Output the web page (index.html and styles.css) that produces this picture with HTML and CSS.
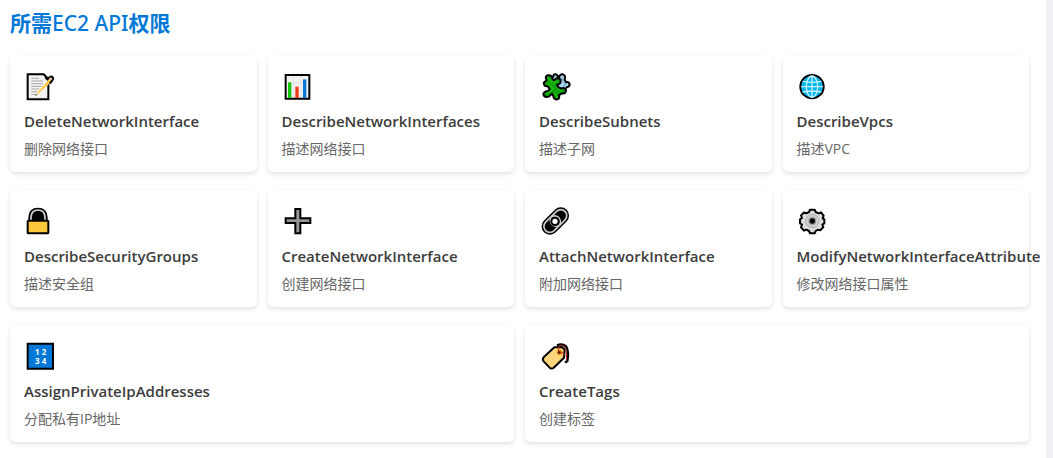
FILE: index.html
```html
<!DOCTYPE html>
<html lang="zh-CN">
<head>
<meta charset="utf-8">
<meta name="viewport" content="width=device-width, initial-scale=1">
<title>所需EC2 API权限</title>
<link rel="stylesheet" href="styles.css">
</head>
<body>
<main class="panel">
<h2 class="title">所需<span class="latin">EC2 API</span>权限</h2>
<ul class="grid">
<li class="card">
<svg class="icon" viewBox="12 9 96 96" aria-hidden="true"><path d="M23 19H71L85 33V94H23Z" fill="#f2f2f2" stroke="#000" stroke-width="6"/><path d="M34 31H57M34 39H69M34 47H69M34 55H66M34 63H58M34 71H52M34 79H48" stroke="#aaa" stroke-width="3"/><path d="M48 83L53 72L90 31L97 38L57 76Z" fill="#ffc83d" stroke="#fff" stroke-width="1"/><path d="M76 28L81 33L90 27Q96 24 99 29Q101 34 96 39L89 47" fill="none" stroke="#000" stroke-width="6"/><path d="M89 35L94 30" stroke="#efaeb0" stroke-width="7"/><path d="M45 84L50 78L52 81Z" fill="#333"/></svg>
<h3 class="name">DeleteNetworkInterface</h3>
<p class="desc">删除网络接口</p>
</li>
<li class="card">
<svg class="icon" viewBox="12 9 96 96" aria-hidden="true"><path d="M23 21H94V92H23Z" fill="#f2f2f2" stroke="#000" stroke-width="6"/><path d="M26 44H91M26 67H91M46 24V89M69 24V89" stroke="#ddd" stroke-width="2"/><path d="M35 43V90" stroke="#16c60c" stroke-width="10"/><path d="M57 56V90" stroke="#f03a17" stroke-width="10"/><path d="M80 34V90" stroke="#0078d7" stroke-width="10"/></svg>
<h3 class="name">DescribeNetworkInterfaces</h3>
<p class="desc">描述网络接口</p>
</li>
<li class="card">
<svg class="icon" viewBox="9 9 96 96" aria-hidden="true"><path d="M45 34L52 25Q52 18 60 19Q67 22 66 30L69 31Q70 18 81 19Q90 22 86 34L90 43Q99 40 101 49Q101 57 92 58L80 72L48 52Z" fill="#a9d3ec" stroke="#000" stroke-width="6" stroke-linejoin="round"/><path d="M74 30L80 36L88 48L78 62" fill="none" stroke="#79a9c4" stroke-width="4"/><path d="M23 44L32 37Q25 24 36 22Q47 20 49 32L54 37L62 31Q75 30 74 42Q71 50 63 50L67 57L75 62Q87 57 90 67Q90 78 78 76L68 82Q73 91 64 94Q53 96 52 84L48 77L38 86Q26 90 22 80Q22 71 36 69L41 64L35 54Q24 57 23 44Z" fill="#13a10e" stroke="#000" stroke-width="6" stroke-linejoin="round"/><path d="M38 28L48 46L64 38M34 46L51 62L33 78M65 63L80 69M56 75L63 88" fill="none" stroke="#16c60c" stroke-width="4"/></svg>
<h3 class="name">DescribeSubnets</h3>
<p class="desc">描述子网</p>
</li>
<li class="card">
<svg class="icon" viewBox="15 9 96 96" aria-hidden="true"><circle cx="60" cy="56" r="35" fill="#00b7f0" stroke="#000" stroke-width="6"/><path d="M60 23V89M27 56H93M32 40Q60 46 88 40M32 72Q60 66 88 72" fill="none" stroke="#c9f0fb" stroke-width="4"/><ellipse cx="60" cy="56" rx="17" ry="32" fill="none" stroke="#c9f0fb" stroke-width="4"/></svg>
<h3 class="name">DescribeVpcs</h3>
<p class="desc">描述VPC</p>
</li>
<li class="card">
<svg class="icon" viewBox="12 9 96 96" aria-hidden="true"><path d="M28 55V43Q29 17 54 17Q79 17 80 43V55Z" fill="#000" stroke="#000" stroke-width="6"/><path d="M33 54V43Q34 21 54 21Q74 21 75 43V54" fill="none" stroke="#d3d3d3" stroke-width="5"/><rect x="23" y="53" width="62" height="38" rx="2" fill="#ffc83d" stroke="#000" stroke-width="6"/></svg>
<h3 class="name">DescribeSecurityGroups</h3>
<p class="desc">描述安全组</p>
</li>
<li class="card">
<svg class="icon" viewBox="12 9 96 96" aria-hidden="true"><path d="M52 18H67V46H97V60H67V91H52V60H23V46H52Z" fill="#969696" stroke="#000" stroke-width="6"/></svg>
<h3 class="name">CreateNetworkInterface</h3>
<p class="desc">创建网络接口</p>
</li>
<li class="card">
<svg class="icon" viewBox="9 9 96 96" aria-hidden="true"><g transform="rotate(-45 58 54)"><rect x="10" y="29" width="96" height="50" rx="25"/><g fill="none" stroke="#ccc" stroke-width="5"><rect x="17" y="36" width="55" height="36" rx="18"/><rect x="44" y="36" width="55" height="36" rx="18"/></g></g><circle cx="57" cy="55" r="11" fill="#fff" stroke="#000" stroke-width="6"/></svg>
<h3 class="name">AttachNetworkInterface</h3>
<p class="desc">附加网络接口</p>
</li>
<li class="card">
<svg class="icon" viewBox="15 9 96 96" aria-hidden="true"><path d="M54 20H68L71 27L80 31L87 28L95 38L92 46L97 49V61L91 65L94 72L85 82L78 80L71 84L68 91H54L51 84L43 80L36 83L27 73L30 65L24 61V49L30 45L27 37L36 28L43 31L51 27Z" fill="#dcdcdc" stroke="#000" stroke-width="6" stroke-linejoin="round"/><circle cx="61" cy="54" r="20" fill="#d0d0d0" stroke="#999" stroke-width="2"/><circle cx="61" cy="54" r="12" fill="#999"/><circle cx="61" cy="54" r="8"/></svg>
<h3 class="name">ModifyNetworkInterfaceAttribute</h3>
<p class="desc">修改网络接口属性</p>
</li>
<li class="card wide">
<svg class="icon" viewBox="12 9 96 96" aria-hidden="true"><path d="M23 17H99V92H23Z" fill="#0078d7" stroke="#000" stroke-width="6"/><g class="digits"><text x="52" y="50">1</text><text x="72" y="50">2</text><text x="52" y="77">3</text><text x="72" y="77">4</text></g></svg>
<h3 class="name">AssignPrivateIpAddresses</h3>
<p class="desc">分配私有IP地址</p>
</li>
<li class="card wide">
<svg class="icon" viewBox="9 9 96 96" aria-hidden="true"><path d="M63 22Q81 15 92 28Q99 45 94 69L87 74" fill="none" stroke="#000" stroke-width="7"/><path d="M23 58L55 28L78 27L86 35L84 59L53 89Q47 94 41 89L23 70Q18 64 23 58Z" fill="#ffd67b" stroke="#000" stroke-width="6" stroke-linejoin="round"/><circle cx="71" cy="43" r="9" fill="#f7a51c"/><circle cx="70" cy="43" r="5" fill="#4a1708"/><path d="M70 43Q63 27 72 23Q84 20 89 33Q94 48 91 67M71 43Q83 43 88 53" fill="none" stroke="#b92c18" stroke-width="3"/></svg>
<h3 class="name">CreateTags</h3>
<p class="desc">创建标签</p>
</li>
</ul>
</main>
</body>
</html>
```
FILE: styles.css
```css
* {
  box-sizing: border-box;
}

body {
  margin: 0;
  background: #eef0f4;
  font-family: "Open Sans", "Noto Sans CJK SC", sans-serif;
}

.panel {
  min-height: 100vh;
  margin-right: 7px;
  padding: 8px 17px 16px 10px;
  overflow: hidden;
  background: #fff;
}

.title {
  margin: 0 0 17px;
  color: #0078d7;
  font-family: "Noto Sans", "Noto Sans CJK SC", sans-serif;
  font-size: 21px;
  line-height: 30px;
  font-weight: 700;
}

.latin {
  font-weight: 500;
}

.grid {
  display: grid;
  grid-template-columns: repeat(4, minmax(0, 1fr));
  gap: 18px 11px;
  margin: 0;
  padding: 0;
  list-style: none;
}

.card {
  padding: 16px 14px 13px;
  border-radius: 6px;
  background: #fff;
  box-shadow: 0 2px 5px rgba(0, 0, 0, 0.12);
}

.wide {
  grid-column: span 2;
}

.icon {
  display: block;
  width: 32px;
  height: 32px;
}

.digits {
  fill: #fff;
  font-size: 24px;
  font-weight: 700;
  text-anchor: middle;
}

.name {
  margin: 7px 0 6px;
  color: #3c3c3c;
  font-size: 15px;
  line-height: 22px;
  font-weight: 600;
  white-space: nowrap;
}

.desc {
  margin: 0;
  color: #666;
  font-size: 14px;
  line-height: 21px;
}
```
